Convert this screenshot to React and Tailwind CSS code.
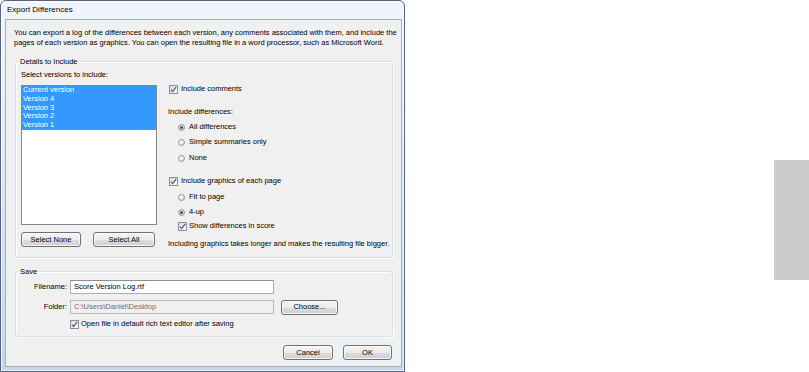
import React from "react";

function Check() {
  return (
    <span className="flex h-[9px] w-[9px] shrink-0 items-center justify-center border border-[#8f8f8f] bg-[linear-gradient(135deg,#d9d9d9,#ffffff)]">
      <svg width="7" height="7" viewBox="0 0 7 7">
        <path d="M1 3.6 L2.7 5.6 L6.2 0.8" fill="none" stroke="#3d5a98" strokeWidth="1.2" />
      </svg>
    </span>
  );
}

function Radio({ on }) {
  return (
    <span className="flex h-[7px] w-[7px] shrink-0 items-center justify-center rounded-full border border-[#8f8f8f] bg-[radial-gradient(circle_at_35%_35%,#ffffff,#d0d0d0)]">
      {on && <span className="h-[3px] w-[3px] rounded-full bg-[#1d4f7c]" />}
    </span>
  );
}

function Btn({ children, w, def }) {
  return (
    <div
      className={
        "flex h-[15px] items-center justify-center rounded-[3px] border bg-[linear-gradient(#f4f4f4_0%,#ebebeb_50%,#dddddd_51%,#cfcfcf_100%)] shadow-[inset_0_0_0_1px_rgba(255,255,255,0.8)] " +
        (def ? "border-[#3c7fb1] shadow-[inset_0_0_0_1px_#bfe2f8]" : "border-[#707070]")
      }
      style={{ width: w }}
    >
      {children}
    </div>
  );
}

export default function App() {
  return (
    <div className="flex h-[372px] w-[809px] bg-white font-['Liberation_Sans',Arial,sans-serif] text-[7.5px] text-black">
      <div className="flex h-[372px] w-[405px] shrink-0 flex-col rounded-t-[6px] border border-[#55647a] bg-[linear-gradient(#f2f6fb,#c6d7eb)] pb-[4px] pl-[4px] pr-[2px] shadow-[inset_0_0_0_1px_rgba(255,255,255,0.7)]">
        <div className="flex h-[18px] items-center pl-[2px] text-[8px] text-black">Export Differences</div>
        <div className="flex flex-1 flex-col border border-[#9fb1c6] bg-[#f0f0f0]">
          <div className="pl-[8px] pt-[8px] leading-[9.5px] whitespace-nowrap">
            You can export a log of the differences between each version, any comments associated with them, and include the
            <br />
            pages of each version as graphics. You can open the resulting file in a word processor, such as Microsoft Word.
          </div>

          <div className="relative ml-[9px] mt-[14px] h-[197px] w-[378px] rounded-[3px] border border-[#d5dfe5] shadow-[inset_1px_1px_0_#ffffff,1px_1px_0_#ffffff]">
            <span className="absolute -top-[5px] left-[3px] bg-[#f0f0f0] px-[1px] leading-[10px]">Details to Include</span>
            <div className="flex pl-[5px]">
              <div className="flex w-[136px] flex-col pt-[8px]">
                <div className="leading-[10px]">Select versions to include:</div>
                <div className="mt-[5px] h-[140px] border border-[#828790] bg-white">
                  {["Current version", "Version 4", "Version 3", "Version 2", "Version 1"].map((v) => (
                    <div key={v} className="flex h-[8.8px] items-center bg-[#3399ff] pl-[1px] leading-[8.8px] text-white">
                      {v}
                    </div>
                  ))}
                </div>
                <div className="mt-[7px] flex gap-[12px]">
                  <Btn w={60}>Select None</Btn>
                  <Btn w={62}>Select All</Btn>
                </div>
              </div>

              <div className="ml-[11px] flex flex-col">
                <div className="mt-[22px] flex h-[10px] items-center gap-[3px] pl-[1px]">
                  <Check />
                  <span>Include comments</span>
                </div>
                <div className="mt-[13px] flex h-[10px] items-center">Include differences:</div>
                <div className="mt-[5px] flex h-[10px] items-center gap-[4px] pl-[10px]">
                  <Radio on />
                  <span>All differences</span>
                </div>
                <div className="mt-[5px] flex h-[10px] items-center gap-[4px] pl-[10px]">
                  <Radio />
                  <span>Simple summaries only</span>
                </div>
                <div className="mt-[6px] flex h-[10px] items-center gap-[4px] pl-[10px]">
                  <Radio />
                  <span>None</span>
                </div>
                <div className="mt-[13px] flex h-[10px] items-center gap-[3px] pl-[1px]">
                  <Check />
                  <span>Include graphics of each page</span>
                </div>
                <div className="mt-[6px] flex h-[10px] items-center gap-[4px] pl-[10px]">
                  <Radio />
                  <span>Fit to page</span>
                </div>
                <div className="mt-[5px] flex h-[10px] items-center gap-[4px] pl-[10px]">
                  <Radio on />
                  <span>4-up</span>
                </div>
                <div className="mt-[4px] flex h-[10px] items-center gap-[2px] pl-[10px]">
                  <Check />
                  <span>Show differences in score</span>
                </div>
                <div className="mt-[8px] flex h-[10px] items-center whitespace-nowrap">
                  Including graphics takes longer and makes the resulting file bigger.
                </div>
              </div>
            </div>
          </div>

          <div className="relative ml-[9px] mt-[13px] h-[66px] w-[378px] rounded-[3px] border border-[#d5dfe5] shadow-[inset_1px_1px_0_#ffffff,1px_1px_0_#ffffff]">
            <span className="absolute -top-[5px] left-[3px] bg-[#f0f0f0] px-[1px] leading-[10px]">Save</span>
            <div className="flex flex-col pt-[8px]">
              <div className="flex h-[14px] items-center">
                <span className="w-[51px] text-right">Filename:</span>
                <div className="ml-[3px] flex h-[14px] w-[204px] items-center border border-[#abadb3] border-t-[#8e8f8f] bg-white pl-[3px]">
                  Score Version Log.rtf
                </div>
              </div>
              <div className="mt-[6px] flex h-[14px] items-center">
                <span className="w-[51px] text-right">Folder:</span>
                <div className="ml-[3px] flex h-[14px] w-[204px] items-center border border-[#b5b9bd] bg-[#f0f0f0] pl-[3px] text-[#6d6d6d]">
                  C:\Users\Daniel\Desktop
                </div>
                <div className="ml-[7px]">
                  <Btn w={57}>Choose...</Btn>
                </div>
              </div>
              <div className="mt-[5px] flex h-[10px] items-center gap-[2px] pl-[54px]">
                <Check />
                <span>Open file in default rich text editor after saving</span>
              </div>
            </div>
          </div>

          <div className="mt-[8px] flex justify-end gap-[10px] pr-[9px]">
            <Btn w={50}>Cancel</Btn>
            <Btn w={49} def>
              OK
            </Btn>
          </div>
        </div>
      </div>
      <div className="ml-auto mt-[160px] h-[120px] w-[35px] bg-[#cccccc]" />
    </div>
  );
}
